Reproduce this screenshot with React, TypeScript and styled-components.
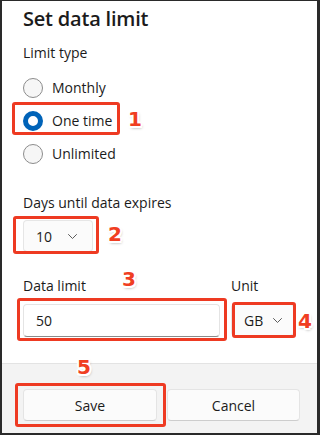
import React from "react";
import styled, { createGlobalStyle } from "styled-components";

const Global = createGlobalStyle`
  html, body { margin: 0; padding: 0; background: #ffffff; }
  body { font-family: "Open Sans", "Noto Sans", sans-serif; color: #1b1b1b; }
  * { box-sizing: border-box; }
`;

const Frame = styled.div`
  width: 320px;
  height: 435px;
  border-style: solid;
  border-color: #2a2a2a;
  border-width: 1px 3px 2px 2px;
  display: flex;
  flex-direction: column;
  background: #ffffff;
  overflow: hidden;
`;

const Content = styled.div`
  flex: 1;
  display: flex;
  flex-direction: column;
  padding: 4px 17px 0 21px;
`;

const Title = styled.h1`
  margin: 0;
  font-size: 20px;
  line-height: 28px;
  font-weight: 600;
  letter-spacing: -0.2px;
`;

const Label = styled.div<{ $top: number }>`
  margin-top: ${(p) => p.$top}px;
  font-size: 14px;
  line-height: 20px;
`;

const RadioGroup = styled.div`
  margin-top: 15px;
  display: flex;
  flex-direction: column;
  align-items: flex-start;
  gap: 13px;
`;

const RadioRow = styled.label`
  position: relative;
  display: inline-flex;
  align-items: center;
  gap: 9px;
  height: 20px;
  font-size: 14px;
  line-height: 20px;
`;

const RadioCircle = styled.span<{ $checked?: boolean }>`
  width: 20px;
  height: 20px;
  border-radius: 50%;
  flex: none;
  background: ${(p) => (p.$checked ? "#ffffff" : "#f6f6f6")};
  border: ${(p) => (p.$checked ? "5.5px solid #0063b8" : "1px solid #8c8c8c")};
`;

const Anchor = styled.div<{ $top?: number }>`
  position: relative;
  display: inline-flex;
  width: fit-content;
  margin-top: ${(p) => p.$top ?? 0}px;
`;

const Dropdown = styled.div<{ $w: number; $pr: number }>`
  width: ${(p) => p.$w}px;
  height: 32px;
  display: flex;
  align-items: center;
  justify-content: space-between;
  padding: 0 ${(p) => p.$pr}px 0 12px;
  background: #fbfbfb;
  border: 1px solid #e6e6e6;
  border-bottom-color: #cfcfcf;
  border-radius: 4px;
  font-size: 14px;
`;

const FieldRow = styled.div`
  margin-top: 24px;
  display: flex;
  gap: 11px;
  align-items: flex-start;
`;

const Field = styled.div`
  display: flex;
  flex-direction: column;
`;

const FieldLabel = styled.div`
  font-size: 14px;
  line-height: 20px;
  margin-bottom: 8px;
`;

const TextBox = styled.div`
  width: 197px;
  height: 33px;
  display: flex;
  align-items: center;
  padding-left: 12px;
  background: #ffffff;
  border: 1px solid #e4e4e4;
  border-bottom: 1px solid #8a8a8a;
  border-radius: 4px;
  font-size: 14px;
`;

const Footer = styled.div`
  height: 70px;
  flex: none;
  background: #f3f3f3;
  border-top: 1px solid #e3e3e3;
  display: grid;
  grid-template-columns: 134px 133px;
  column-gap: 10px;
  align-content: start;
  padding: 25px 17px 0 21px;
`;

const Button = styled.button`
  position: relative;
  height: 32px;
  background: #fbfbfb;
  border: 1px solid #e4e4e4;
  border-bottom-color: #cdcdcd;
  border-radius: 4px;
  font-family: inherit;
  font-size: 14px;
  color: #1b1b1b;
  padding: 0;
`;

const Mark = styled.span<{ $l: number; $t: number; $w: number; $h: number }>`
  position: absolute;
  left: ${(p) => p.$l}px;
  top: ${(p) => p.$t}px;
  width: ${(p) => p.$w}px;
  height: ${(p) => p.$h}px;
  border: 3px solid #ee3a22;
  border-radius: 3px;
  pointer-events: none;
`;

const Badge = styled.span<{ $l: number; $t: number }>`
  position: absolute;
  left: ${(p) => p.$l}px;
  top: ${(p) => p.$t}px;
  font-family: "DejaVu Sans", "Liberation Sans", sans-serif;
  font-weight: 700;
  font-size: 20px;
  line-height: 22px;
  color: #f03e22;
  text-shadow:
    -1.5px -1.5px 0 #fff, 1.5px -1.5px 0 #fff, -1.5px 1.5px 0 #fff, 1.5px 1.5px 0 #fff,
    0 -2px 0 #fff, 0 2px 0 #fff, -2px 0 0 #fff, 2px 0 0 #fff,
    1px 2px 3px rgba(0, 0, 0, 0.4);
  pointer-events: none;
`;

const Chevron = () => (
  <svg width="9" height="5" viewBox="0 0 9 5" fill="none">
    <path d="M0.5 0.5 L4.5 4.5 L8.5 0.5" stroke="#5c5c5c" strokeWidth="1" strokeLinecap="round" strokeLinejoin="round" />
  </svg>
);

export default function App() {
  return (
    <>
      <Global />
      <Frame>
        <Content>
          <Title>Set data limit</Title>
          <Label $top={10}>Limit type</Label>
          <RadioGroup>
            <RadioRow>
              <RadioCircle />
              Monthly
            </RadioRow>
            <RadioRow>
              <RadioCircle $checked />
              One time
              <Mark $l={-11} $t={-9} $w={108} $h={33} />
              <Badge $l={105} $t={-3}>1</Badge>
            </RadioRow>
            <RadioRow>
              <RadioCircle />
              Unlimited
            </RadioRow>
          </RadioGroup>
          <Label $top={29}>Days until data expires</Label>
          <Anchor $top={7}>
            <Dropdown $w={70} $pr={15}>
              10
              <Chevron />
            </Dropdown>
            <Mark $l={-10} $t={-4} $w={86} $h={38} />
            <Badge $l={85} $t={3}>2</Badge>
          </Anchor>
          <FieldRow>
            <Field>
              <FieldLabel>Data limit</FieldLabel>
              <Anchor>
                <TextBox>50</TextBox>
                <Mark $l={-6} $t={-6} $w={210} $h={43} />
                <Badge $l={99} $t={-36}>3</Badge>
              </Anchor>
            </Field>
            <Field>
              <FieldLabel>Unit</FieldLabel>
              <Anchor>
                <Dropdown $w={63} $pr={11}>
                  GB
                  <Chevron />
                </Dropdown>
                <Mark $l={1} $t={-2} $w={64} $h={36} />
                <Badge $l={67} $t={6}>4</Badge>
              </Anchor>
            </Field>
          </FieldRow>
        </Content>
        <Footer>
          <Button>
            Save
            <Mark $l={-9} $t={-7} $w={151} $h={44} />
            <Badge $l={53} $t={-34}>5</Badge>
          </Button>
          <Button>Cancel</Button>
        </Footer>
      </Frame>
    </>
  );
}
